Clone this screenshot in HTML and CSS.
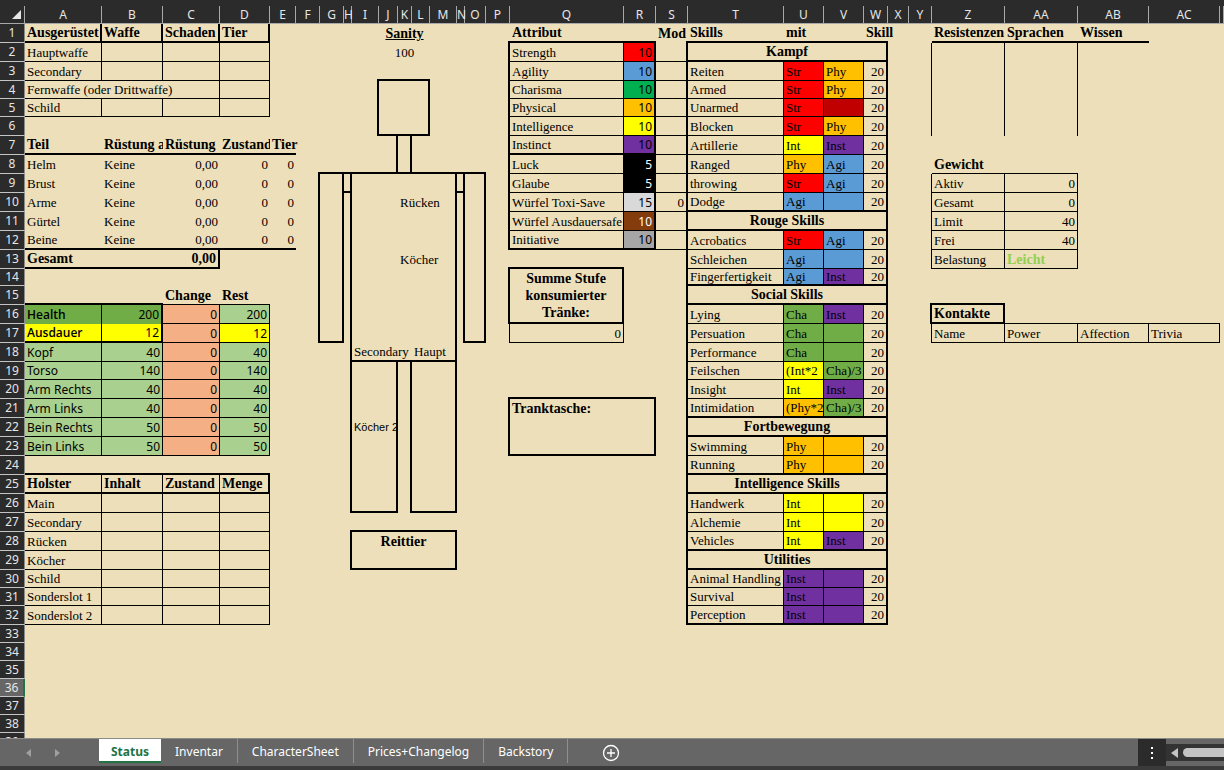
FILE: index.html
```html
<!DOCTYPE html>
<html lang="de">
<head>
<meta charset="utf-8">
<title>Status</title>
<link rel="stylesheet" href="styles.css">
</head>
<body>
<main class="sheet">
  <table class="grid" id="grid"></table>
</main>
<footer class="bar">
  <div class="nav">
    <button class="nav-button" aria-label="Previous sheet"><svg width="6" height="8" viewBox="0 0 6 8"><path d="M5 0v8L0 4z"/></svg></button>
    <button class="nav-button" aria-label="Next sheet"><svg width="6" height="8" viewBox="0 0 6 8"><path d="M1 0v8l5-4z"/></svg></button>
  </div>
  <nav class="tabs">
    <button class="tab tab-active">Status</button>
    <button class="tab">Inventar</button>
    <button class="tab">CharacterSheet</button>
    <button class="tab">Prices+Changelog</button>
    <button class="tab">Backstory</button>
  </nav>
  <button class="add" aria-label="New sheet"><svg width="18" height="18" viewBox="0 0 18 18"><circle cx="9" cy="9" r="7.5"/><path d="M9 5v8M5 9h8"/></svg></button>
  <div class="handle"><svg width="4" height="12" viewBox="0 0 4 12"><path d="M1 0h2v2H1zM1 5h2v2H1zM1 10h2v2H1z"/></svg></div>
  <div class="scroll">
    <svg class="scroll-arrow" width="7" height="10" viewBox="0 0 7 10"><path d="M7 0v10L0 5z"/></svg>
    <div class="scroll-thumb"></div>
  </div>
</footer>
<script src="sheet.js"></script>
</body>
</html>
```
FILE: styles.css
```css
* {
  box-sizing: border-box;
}

body {
  margin: 0;
  height: 100vh;
  display: flex;
  flex-direction: column;
  overflow: hidden;
  background: #3a3a3a;
  font-family: "Noto Sans", sans-serif;
  font-size: 12px;
}

button {
  margin: 0;
  padding: 0;
  border: 0;
  background: none;
  font: inherit;
  color: inherit;
}

.sheet {
  flex: 1;
  min-height: 0;
  overflow: hidden;
  background: #eddfb9;
}

.grid {
  width: 100%;
  table-layout: fixed;
  border-collapse: separate;
  border-spacing: 0;
}

.grid th {
  padding: 0;
  background: #2b2b2b;
  color: #e6e6e6;
  font-weight: 400;
  line-height: 16px;
  white-space: nowrap;
}

.grid thead th {
  height: 24px;
  padding-top: 6px;
  border-bottom: 1px solid #8c8c86;
  border-right: 1px solid;
  border-image: linear-gradient(#2b2b2b 7px, #a8a8a8 7px) 1;
  border-left: 0;
  border-top: 0;
}

.grid tbody th {
  border-right: 1px solid #8c8c86;
  border-bottom: 1px solid #c4c4c4;
}

.grid tbody .current {
  background: #666;
  border-right: 2px solid #217346;
}

.corner svg {
  display: block;
  margin-left: auto;
  margin-right: 3px;
  fill: #e6e6e6;
}

.grid td {
  padding: 0 2px;
  border: 0 solid #000;
  color: #000;
  font-family: "Liberation Serif", serif;
  font-size: 13px;
  line-height: 15px;
  white-space: nowrap;
}

.grid .right { border-right-width: 1px; }
.grid .bottom { border-bottom-width: 1px; }
.grid .thick-right { border-right-width: 2px; }
.grid .thick-bottom { border-bottom-width: 2px; }

/* Joins the top and left lines of an outline in the cell diagonally above it. */
.grid .joint {
  background: linear-gradient(#000, #000) right bottom / 2px 2px no-repeat border-box;
}

.grid .bold { font-size: 14px; font-weight: 700; }
.grid .number { text-align: right; }
.grid .center { text-align: center; }
.grid .underline { text-decoration: underline; }
.grid .clip { overflow: hidden; }
.grid .wrap { white-space: normal; line-height: 17px; }
.grid .sans { font-family: "Noto Sans", sans-serif; font-size: 12px; }
.grid .sans.bold { font-family: "Open Sans", sans-serif; font-weight: 600; }
.grid .small { font-family: "Liberation Sans", sans-serif; font-size: 11px; }

.grid .red { background: #f00; }
.grid .darkred { background: #c00000; }
.grid .blue { background: #5b9bd5; }
.grid .green { background: #00b050; }
.grid .leaf { background: #70ad47; }
.grid .mint { background: #a9d08e; }
.grid .salmon { background: #f4b084; }
.grid .orange { background: #ffc000; }
.grid .yellow { background: #ff0; }
.grid .purple { background: #7030a0; }
.grid .black { background: #000; color: #fff; }
.grid .silver { background: #d9d9d9; }
.grid .brown { background: #843c0c; color: #fff; }
.grid .gray { background: #a6a6a6; }
.grid .light { color: #92d050; }

.bar {
  flex: none;
  display: flex;
  align-items: stretch;
  height: 32px;
  border-top: 1px solid #8c8c86;
  border-bottom: 4px solid #3a3a3a;
  background: #666;
  color: #fff;
}

.nav {
  display: flex;
  align-items: center;
  gap: 22px;
  width: 99px;
  padding-left: 26px;
}

.nav-button {
  display: flex;
  fill: #a0a0a0;
}

.tabs {
  display: flex;
  align-items: flex-start;
}

.tab {
  height: 24px;
  padding: 0 14px;
  border-right: 1px solid #8f8f8f;
  line-height: 25px;
}

.tab-active {
  padding: 0 12px;
  border-right: 0;
  border-bottom: 2px solid #217346;
  background: #fff;
  color: #217346;
  font-weight: 700;
}

.add {
  display: flex;
  align-items: center;
  margin-left: 34px;
}

.add svg {
  fill: none;
  stroke: #fff;
  stroke-width: 1.3;
}

.handle {
  display: flex;
  align-items: center;
  justify-content: center;
  width: 28px;
  margin-left: auto;
  background: #2b2b2b;
  fill: #fff;
}

.scroll {
  display: flex;
  align-items: center;
  align-self: center;
  gap: 5px;
  width: 58px;
  height: 17px;
  padding-left: 5px;
  background: #333;
}

.scroll-arrow {
  fill: #c4c4c4;
}

.scroll-thumb {
  flex: 1;
  height: 9px;
  border-radius: 5px 0 0 5px;
  background: #c4c4c4;
}
```
FILE: sheet.js
```js
const columns = [
  ["A", 77], ["B", 61], ["C", 57], ["D", 50], ["E", 26], ["F", 24], ["G", 24], ["H", 8],
  ["I", 27], ["J", 19], ["K", 14], ["L", 18], ["M", 27], ["N", 8], ["O", 21], ["P", 24],
  ["Q", 114], ["R", 32], ["S", 32], ["T", 96], ["U", 40], ["V", 40], ["W", 24], ["X", 21],
  ["Y", 23], ["Z", 73], ["AA", 73], ["AB", 71], ["AC", 71], ["", 0]
];
const names = columns.map(c => c[0]);
const rowCount = 39;
const rowHeights = { 4: 18, 5: 18, 14: 17, 19: 18, 30: 18, 31: 18 };
const heightOf = r => rowHeights[r] || (r > 32 ? 18 : 19);
const cells = {};

function cell(col, row) {
  const key = col + ":" + row;
  return cells[key] || (cells[key] = { text: "", classes: new Set() });
}

function parse(range) {
  const [from, to = from] = range.split(":");
  const [, c1, r1] = from.match(/([A-Z]+)(\d+)/);
  const [, c2, r2] = to.match(/([A-Z]+)(\d+)/);
  return [names.indexOf(c1), +r1, names.indexOf(c2), +r2];
}

function format(range, classes) {
  const [c1, r1, c2, r2] = parse(range);
  for (let c = c1; c <= c2; c++)
    for (let r = r1; r <= r2; r++)
      classes.split(" ").forEach(k => cell(c, r).classes.add(k));
}

function put(ref, text, classes) {
  const [c, r] = parse(ref);
  cell(c, r).text = text;
  if (classes) format(ref, classes);
}

// Writes a list of texts downwards, starting at the given cell.
function list(ref, texts, classes) {
  const [c, r] = parse(ref);
  texts.forEach((t, i) => put(names[c] + (r + i), t, classes));
}

function merge(range, text, classes) {
  const [c1, r1, c2, r2] = parse(range);
  for (let c = c1; c <= c2; c++)
    for (let r = r1; r <= r2; r++) cell(c, r).hidden = true;
  const head = cell(c1, r1);
  head.hidden = false;
  head.colSpan = c2 - c1 + 1;
  head.rowSpan = r2 - r1 + 1;
  head.text = text;
  [[c2, r1], [c1, r2]].forEach(([c, r]) => cell(c, r).classes.forEach(k => head.classes.add(k)));
  classes.split(" ").forEach(k => head.classes.add(k));
}

function outline(range, prefix = "thick-") {
  const [c1, r1, c2, r2] = parse(range);
  for (let r = r1; r <= r2; r++) {
    if (c1 > 0) cell(c1 - 1, r).classes.add(prefix + "right");
    cell(c2, r).classes.add(prefix + "right");
  }
  for (let c = c1; c <= c2; c++) {
    cell(c, r1 - 1).classes.add(prefix + "bottom");
    cell(c, r2).classes.add(prefix + "bottom");
  }
  if (prefix && c1 > 0) cell(c1 - 1, r1 - 1).classes.add("joint");
}

function lines(range) {
  format(range, "right bottom");
  outline(range, "");
}

// Equipped weapons
["Ausgerüstet", "Waffe", "Schaden", "Tier"].forEach((t, i) =>
  put(names[i] + "1", t, "bold clip thick-right thick-bottom"));
lines("A2:D5");
cell(0, 4).classes.delete("right");
cell(1, 4).classes.delete("right");
list("A2", ["Hauptwaffe", "Secondary", "Fernwaffe (oder Drittwaffe)", "Schild"]);

// Armour
["Teil", "Rüstung a", "Rüstung", "Zustand", "Tier"].forEach((t, i) =>
  put(names[i] + "7", t, "bold thick-bottom" + (i === 1 || i === 3 ? " clip" : "")));
list("A8", ["Helm", "Brust", "Arme", "Gürtel", "Beine"]);
list("B8", Array(5).fill("Keine"));
list("C8", Array(5).fill("0,00"), "number");
list("D8", Array(5).fill("0"), "number");
list("E8", Array(5).fill("0"), "number");
format("A12:E12", "thick-bottom");
put("A13", "Gesamt", "bold");
put("C13", "0,00", "bold number thick-right");
format("A13:C13", "thick-bottom");

// Health
put("C15", "Change", "bold");
put("D15", "Rest", "bold");
lines("A16:D23");
cell(0, 16).classes.delete("bottom");
cell(1, 16).classes.delete("bottom");
format("A15:B15", "thick-bottom");
format("A17:B17", "thick-bottom");
format("B16:B17", "thick-right");
const amounts = ["200", "12", "40", "140", "40", "40", "50", "50"];
list("A16", ["Health", "Ausdauer", "Kopf", "Torso", "Arm Rechts", "Arm Links", "Bein Rechts", "Bein Links"], "sans");
list("B16", amounts, "sans number");
list("C16", Array(8).fill("0"), "sans number salmon");
list("D16", amounts, "sans number");
format("A16:A17", "bold");
format("A16:B16", "leaf");
format("A17:B17", "yellow");
format("A18:B23", "mint");
format("D16", "mint");
format("D17", "yellow");
format("D18:D23", "mint");

// Holster
lines("A25:D32");
outline("A25:D25");
["Holster", "Inhalt", "Zustand", "Menge"].forEach((t, i) => put(names[i] + "25", t, "bold"));
list("A26", ["Main", "Secondary", "Rücken", "Köcher", "Schild", "Sonderslot 1", "Sonderslot 2"]);

// Figure
merge("J1:L1", "Sanity", "bold underline center");
merge("J2:L2", "100", "center");
outline("J4:L6");
outline("K7:K8");
outline("G9:G17");
outline("H9");
outline("I9:M18");
outline("N9");
outline("O9:O17");
outline("I19:J26");
outline("L19:M26");
put("K10", "Rücken");
put("K13", "Köcher");
put("I18", "Secondary");
put("L18", "Haupt");
put("I22", "Köcher 2", "small");
outline("I28:M29");
merge("I28:M28", "Reittier", "bold center");
cell(8, 28).classes.delete("thick-bottom");

// Attributes
put("Q1", "Attribut", "bold");
put("S1", "Mod", "bold");
lines("Q2:R12");
format("S2:S12", "bottom");
outline("Q2:R12");
format("Q7:R7", "thick-bottom");
[
  ["Strength", 10, "red"], ["Agility", 10, "blue"], ["Charisma", 10, "green"],
  ["Physical", 10, "orange"], ["Intelligence", 10, "yellow"], ["Instinct", 10, "purple"],
  ["Luck", 5, "black"], ["Glaube", 5, "black"], ["Würfel Toxi-Save", 15, "silver"],
  ["Würfel Ausdauersafe", 10, "brown"], ["Initiative", 10, "gray"]
].forEach(([name, value, color], i) => {
  put("Q" + (i + 2), name, "clip");
  put("R" + (i + 2), value, "sans number " + color);
});
put("S10", "0", "number");

outline("Q14:Q16");
merge("Q14:Q16", "Summe Stufe konsumierter Tränke:", "bold center wrap");
lines("Q17");
put("Q17", "0", "number");
cell(16, 16).classes.add("thick-bottom");
outline("Q21:R23");
put("Q21", "Tranktasche:", "bold");

// Skills
put("T1", "Skills", "bold");
put("U1", "mit", "bold");
put("W1", "Skill", "bold");
const colors = { Str: "red", Phy: "orange", Int: "yellow", Inst: "purple", Agi: "blue", Cha: "leaf" };
const skills = [
  ["Kampf"],
  ["Reiten", "Str", "Phy"], ["Armed", "Str", "Phy"], ["Unarmed", "Str", "", "darkred"],
  ["Blocken", "Str", "Phy"], ["Artillerie", "Int", "Inst"], ["Ranged", "Phy", "Agi"],
  ["throwing", "Str", "Agi"], ["Dodge", "Agi", ""],
  ["Rouge Skills"],
  ["Acrobatics", "Str", "Agi"], ["Schleichen", "Agi", ""], ["Fingerfertigkeit", "Agi", "Inst"],
  ["Social Skills"],
  ["Lying", "Cha", "Inst"], ["Persuation", "Cha", ""], ["Performance", "Cha", ""],
  ["Feilschen", "(Int*2", "Cha)/3"], ["Insight", "Int", "Inst"], ["Intimidation", "(Phy*2", "Cha)/3"],
  ["Fortbewegung"],
  ["Swimming", "Phy", ""], ["Running", "Phy", ""],
  ["Intelligence Skills"],
  ["Handwerk", "Int", ""], ["Alchemie", "Int", ""], ["Vehicles", "Int", "Inst"],
  ["Utilities"],
  ["Animal Handling", "Inst", ""], ["Survival", "Inst", ""], ["Perception", "Inst", ""]
];
const colorOf = text => colors[(text.match(/[A-Z][a-z]+/) || [""])[0]];
lines("T2:W32");
outline("T2:W32");
skills.forEach(([name, first, second, color], i) => {
  const r = i + 2;
  if (first === undefined) {
    outline(`T${r}:W${r}`);
    merge(`T${r}:W${r}`, name, "bold center");
    return;
  }
  put("T" + r, name);
  put("U" + r, first, colorOf(first));
  put("V" + r, second, color || colorOf(second) || colorOf(first));
  put("W" + r, "20", "number");
});

// Languages, weight, contacts
put("Z1", "Resistenzen", "bold clip");
put("AA1", "Sprachen", "bold");
put("AB1", "Wissen", "bold");
format("Z1:AB1", "thick-bottom");
format("Y2:AA6", "right");
put("Z8", "Gewicht", "bold");
lines("Z9:AA13");
list("Z9", ["Aktiv", "Gesamt", "Limit", "Frei", "Belastung"]);
list("AA9", ["0", "0", "40", "40"], "number");
put("AA13", "Leicht", "bold light");
lines("Z17:AC17");
outline("Z16");
put("Z16", "Kontakte", "bold");
["Name", "Power", "Affection", "Trivia"].forEach((t, i) => put(names[25 + i] + "17", t));

// Build the table
const table = document.getElementById("grid");
const group = table.appendChild(document.createElement("colgroup"));
[25, ...columns.map(c => c[1])].forEach(width => {
  const col = group.appendChild(document.createElement("col"));
  if (width) col.style.width = width + "px";
});
const head = table.createTHead().insertRow();
const corner = head.appendChild(document.createElement("th"));
corner.className = "corner";
corner.innerHTML = '<svg width="9" height="9" viewBox="0 0 9 9"><path d="M9 0v9H0z"/></svg>';
names.forEach(name => {
  const th = head.appendChild(document.createElement("th"));
  th.scope = "col";
  th.textContent = name;
});
const body = table.createTBody();
for (let r = 1; r <= rowCount; r++) {
  const tr = body.insertRow();
  tr.style.height = heightOf(r) + "px";
  const th = tr.appendChild(document.createElement("th"));
  th.scope = "row";
  th.textContent = r;
  if (r === 36) th.className = "current";
  names.forEach((_, c) => {
    const data = cell(c, r);
    if (data.hidden) return;
    const td = tr.insertCell();
    td.textContent = data.text;
    td.className = [...data.classes].join(" ");
    if (data.colSpan) td.colSpan = data.colSpan;
    if (data.rowSpan) td.rowSpan = data.rowSpan;
  });
}
```
